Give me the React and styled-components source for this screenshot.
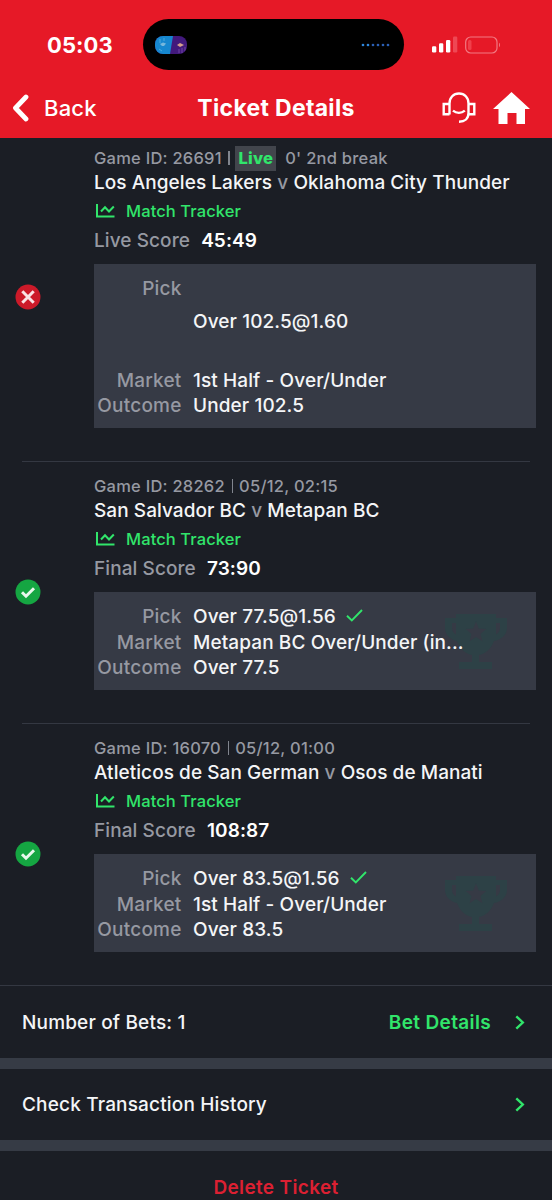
import React from "react";
import styled, { createGlobalStyle } from "styled-components";

const GlobalStyle = createGlobalStyle`
  * {
    box-sizing: border-box;
  }

  body {
    margin: 0;
    background: #1b1e25;
    font-family: Inter, "Liberation Sans", sans-serif;
    overflow: hidden;
  }
`;

const legs = [
  {
    id: "26691",
    live: true,
    time: "0' 2nd break",
    home: "Los Angeles Lakers",
    away: "Oklahoma City Thunder",
    scoreLabel: "Live Score",
    score: "45:49",
    won: false,
    pick: "Over 102.5@1.60",
    market: "1st Half - Over/Under",
    outcome: "Under 102.5",
  },
  {
    id: "28262",
    time: "05/12, 02:15",
    home: "San Salvador BC",
    away: "Metapan BC",
    scoreLabel: "Final Score",
    score: "73:90",
    won: true,
    pick: "Over 77.5@1.56",
    market: "Metapan BC Over/Under (in...",
    outcome: "Over 77.5",
  },
  {
    id: "16070",
    time: "05/12, 01:00",
    home: "Atleticos de San German",
    away: "Osos de Manati",
    scoreLabel: "Final Score",
    score: "108:87",
    won: true,
    pick: "Over 83.5@1.56",
    market: "1st Half - Over/Under",
    outcome: "Over 83.5",
  },
];

function IslandArt() {
  return (
    <svg width="32" height="18" viewBox="0 0 32 18">
      <defs>
        <clipPath id="pill">
          <rect width="32" height="18" rx="8" />
        </clipPath>
      </defs>
      <g clipPath="url(#pill)">
        <rect width="32" height="18" fill="#42197c" />
        <path d="M0 0h18l-3 18H0z" fill="#1687cf" />
        <path d="M5 3v4M9 2v3M4 13l3 2" stroke="#4ba9dc" strokeWidth="1" />
        <path d="M5 8l3-1.500 3 1-2 2.500H7z" fill="#76b7dc" />
        <path d="M22 9l3-2 4 2-4 2z" fill="#d5a08d" />
        <path d="M24 13v4M27 12v5M30 11v4" stroke="#7145a4" strokeWidth="1" />
      </g>
    </svg>
  );
}

function IslandDots() {
  return (
    <svg width="29" height="4" viewBox="0 0 29 4">
      {[0, 1, 2, 3, 4, 5].map((i) => (
        <circle key={i} cx={2 + i * 5} cy="2" r="1.35" fill={i < 2 ? "#2d86dc" : "#2b5fb4"} />
      ))}
    </svg>
  );
}

function Signal() {
  return (
    <svg width="26" height="17" viewBox="0 0 26 17">
      <rect x="0" y="10.300" width="4.300" height="6.200" rx="1.200" fill="#fff" />
      <rect x="7" y="7.300" width="4.300" height="9.200" rx="1.200" fill="#fff" />
      <rect x="14" y="4" width="4.300" height="12.500" rx="1.200" fill="#fff" />
      <rect x="21" y="0.500" width="4.300" height="16" rx="1.200" fill="#ee4854" />
    </svg>
  );
}

function Battery() {
  return (
    <svg width="36" height="18" viewBox="0 0 36 18" fill="none">
      <rect x="0.700" y="1" width="31.300" height="16" rx="5" stroke="#f27a83" strokeWidth="1.200" />
      <rect x="3" y="4" width="3.500" height="10" rx="1.500" fill="#f0404b" />
      <path d="M34 6.800c1.300.600 1.300 3.800 0 4.400z" fill="#f27a83" />
    </svg>
  );
}

function Headset() {
  return (
    <svg width="34" height="32" viewBox="0 0 34 32" fill="none" stroke="#fff" strokeWidth="2.400">
      <path d="M7.500 22.500V11.500C7.500 5.500 11.500 1.500 17 1.500s9.500 4 9.500 10V21c0 5.500-3.500 8.800-9.500 8.800" />
      <path d="M7.500 12H1.700v10.300h5.800M26.500 12h5.800v10.300h-5.800" />
      <path d="M11 18.700c3.300 2.900 8.500 2.900 11.800 0" />
    </svg>
  );
}

function Home() {
  return (
    <svg width="37" height="32" viewBox="0 0 37 32">
      <path d="M18.500 0L37 17h-5v15h-8.500V21h-9v11H5.500V17H0z" fill="#fff" />
    </svg>
  );
}

function TrackerIcon() {
  return (
    <svg width="19" height="14" viewBox="0 0 19 14" fill="none" stroke="#31e56b" strokeWidth="2">
      <path d="M1 0v12.500h17.500" />
      <path d="M5 7.500l4-4.300 4 4.300 4.800-5" />
    </svg>
  );
}

function StatusIcon({ won }) {
  return (
    <svg width="26" height="26" viewBox="0 0 26 26" fill="none">
      <circle cx="13" cy="13" r="12.500" fill={won ? "#15a642" : "#cc1a29"} />
      {won ? (
        <path d="M7 13.200l4 4L19 9.300" stroke="#e9f8ed" strokeWidth="3" />
      ) : (
        <path d="M7.300 7.300l11.400 11.400M18.700 7.300L7.300 18.700" stroke="#fae3e5" strokeWidth="3" />
      )}
    </svg>
  );
}

function Tick() {
  return (
    <svg width="17" height="13" viewBox="0 0 17 13" fill="none">
      <path d="M1 6.800l4.800 4.700L16 1" stroke="#31e56b" strokeWidth="1.900" />
    </svg>
  );
}

function Trophy() {
  return (
    <svg width="62" height="55" viewBox="0 0 62 55" fill="#2d4146">
      <path
        fillRule="evenodd"
        d="M11 0h40v4h11v10c0 7-6 12-13 13-3 8-9 13-15 14v7h13v7H14v-7h13v-7c-6-1-12-6-15-14C6 26 0 21 0 14V4h11zM7 9v5c0 3 1.500 5 4 6.500V9zm44 0v11.500c2.500-1.500 4-3.500 4-6.500V9zM31 7.500l-2.800 7.100-7.500.500 5.800 4.800-1.900 7.300 6.400-4.100 6.400 4.100-1.900-7.300 5.800-4.800-7.500-.500z"
      />
    </svg>
  );
}

function Chevron() {
  return (
    <svg width="10" height="15" viewBox="0 0 10 15" fill="none">
      <path d="M1.300 1.300l6.500 6.200-6.500 6.200" stroke="#31e56b" strokeWidth="2.400" />
    </svg>
  );
}

function Leg({ leg }) {
  return (
    <LegRow>
      <Status>
        <StatusIcon won={leg.won} />
      </Status>
      <Info>
        <Meta>
          Game ID: {leg.id} <Bar />
          {leg.live && <LiveTag>Live</LiveTag>}
          {leg.time}
        </Meta>
        <Teams>
          {leg.home} <span>v</span> {leg.away}
        </Teams>
        <Tracker>
          <TrackerIcon />
          Match Tracker
        </Tracker>
        <Score>
          {leg.scoreLabel} <b>{leg.score}</b>
        </Score>
        <PickBox>
          <PickRow $tall={!leg.won}>
            <Label>Pick</Label>
            <Value>
              {leg.pick}
              {leg.won && <Tick />}
            </Value>
          </PickRow>
          <PickRow>
            <Label>Market</Label>
            <Value>{leg.market}</Value>
          </PickRow>
          <PickRow>
            <Label>Outcome</Label>
            <Value>{leg.outcome}</Value>
          </PickRow>
          {leg.won && (
            <Watermark>
              <Trophy />
            </Watermark>
          )}
        </PickBox>
      </Info>
    </LegRow>
  );
}

export default function App() {
  return (
    <Screen>
      <GlobalStyle />
      <Header>
        <StatusBar>
          <Clock>05:03</Clock>
          <Island>
            <IslandArt />
            <IslandDots />
          </Island>
          <Indicators>
            <Signal />
            <Battery />
          </Indicators>
        </StatusBar>
        <NavBar>
          <Back>
            <svg width="18" height="28" viewBox="0 0 18 28" fill="none">
              <path
                d="M15 3L4.500 14 15 25"
                stroke="#fff"
                strokeWidth="4.800"
                strokeLinecap="round"
                strokeLinejoin="round"
              />
            </svg>
            Back
          </Back>
          <PageTitle>Ticket Details</PageTitle>
          <Actions>
            <Headset />
            <Home />
          </Actions>
        </NavBar>
      </Header>
      <Legs>
        {legs.map((leg) => (
          <Leg leg={leg} key={leg.id} />
        ))}
      </Legs>
      <FooterRow>
        <span>Number of Bets: 1</span>
        <Link>
          Bet Details
          <Chevron />
        </Link>
      </FooterRow>
      <FooterRow>
        <span>Check Transaction History</span>
        <Chevron />
      </FooterRow>
      <DeleteButton>Delete Ticket</DeleteButton>
    </Screen>
  );
}

const Screen = styled.div`
  width: 552px;
  height: 1200px;
  overflow: hidden;
  display: flex;
  flex-direction: column;
  background: #1b1e25;
  color: #f4f5f7;
`;

const Header = styled.header`
  flex: none;
  height: 138px;
  padding-top: 19px;
  background: #e61927;
  color: #fff;
  z-index: 1;
`;

const StatusBar = styled.div`
  display: grid;
  grid-template-columns: 143px 260.5px 1fr;
  align-items: center;
  height: 51px;
`;

const Clock = styled.span`
  padding-left: 47px;
  font-size: 22px;
  font-weight: 700;
  letter-spacing: 0.1px;
`;

const Island = styled.div`
  display: flex;
  align-items: center;
  justify-content: space-between;
  height: 51px;
  padding: 0 13.5px 0 12px;
  border-radius: 26px;
  background: #000;
`;

const Indicators = styled.div`
  display: flex;
  align-items: center;
  gap: 7px;
  padding-left: 28px;
`;

const NavBar = styled.div`
  display: grid;
  grid-template-columns: 1fr auto 1fr;
  align-items: center;
  height: 68px;
  padding: 7px 22px 0;
`;

const Back = styled.div`
  display: flex;
  align-items: center;
  gap: 15.5px;
  margin-left: -11.5px;
  font-size: 22px;
  font-weight: 500;
  letter-spacing: 0.2px;
`;

const PageTitle = styled.h1`
  margin: 0;
  font-size: 23px;
  font-weight: 700;
  letter-spacing: 0.3px;
`;

const Actions = styled.div`
  display: flex;
  align-items: center;
  justify-content: flex-end;
  gap: 17px;
`;

/* the list is scrolled a few pixels under the header */
const Legs = styled.main`
  flex: none;
  margin-top: -4px;
`;

const LegRow = styled.section`
  display: flex;
  margin: 0 22px;
  padding: 12px 0 33.5px;
  border-bottom: 1px solid #343842;

  &:last-child {
    margin: 0;
    padding-left: 22px;
    padding-right: 22px;
  }
`;

const Status = styled.div`
  display: flex;
  flex: none;
  align-items: center;
  width: 72px;
  margin: -14px 0 -33.5px;

  svg {
    margin-left: -7.5px;
  }
`;

const Info = styled.div`
  flex: 1;
  min-width: 0;
  margin-right: -5.5px;
`;

const Meta = styled.div`
  display: flex;
  align-items: center;
  height: 24px;
  color: #9699a2;
  font-size: 16.5px;
  font-weight: 500;
  letter-spacing: 0.24px;
  white-space: pre;
`;

const Bar = styled.i`
  width: 1.5px;
  height: 14px;
  margin: 0 6px 0 2px;
  background: #81858e;
`;

const LiveTag = styled.b`
  margin: 0 9px 0 -0.5px;
  padding: 0 3px;
  line-height: 25px;
  background: #42454c;
  color: #31e56b;
  font-weight: 800;
`;

const Teams = styled.div`
  height: 24px;
  line-height: 26px;
  font-size: 19px;
  font-weight: 500;
  letter-spacing: 0.06px;
  white-space: nowrap;

  span {
    color: #9699a2;
  }
`;

const Tracker = styled.div`
  display: flex;
  align-items: center;
  gap: 11px;
  height: 33px;
  padding-left: 2px;
  color: #31e56b;
  font-size: 16.5px;
  font-weight: 500;
  letter-spacing: 0.1px;
`;

const Score = styled.div`
  height: 37px;
  line-height: 27px;
  color: #9699a2;
  font-size: 19px;
  font-weight: 500;
  letter-spacing: 0.08px;

  b {
    margin-left: 6px;
    color: #fff;
    font-weight: 600;
  }
`;

const PickBox = styled.div`
  position: relative;
  padding: 12px 0 9px;
  background: #363a45;
`;

const PickRow = styled.div`
  display: flex;
  gap: 11.5px;
  height: ${({ $tall }) => ($tall ? "91.5px" : "25.5px")};
  align-items: ${({ $tall }) => ($tall ? "stretch" : "center")};
  font-size: 19px;
  font-weight: 500;
  line-height: 25.5px;
  letter-spacing: 0.1px;
  white-space: nowrap;
`;

const Label = styled.span`
  flex: none;
  width: 87.5px;
  color: #9699a2;
  letter-spacing: 0.2px;
  text-align: right;
`;

const Value = styled.span`
  display: flex;
  align-items: center;
  gap: 10px;
  z-index: 1;

  svg {
    margin-top: -3px;
  }
`;

const Watermark = styled.div`
  position: absolute;
  top: 22px;
  right: 29px;
  display: flex;
`;

const FooterRow = styled.div`
  display: flex;
  flex: none;
  align-items: center;
  justify-content: space-between;
  height: 82.5px;
  padding: 1px 27px 0 22px;
  border-bottom: 11px solid #363b45;
  font-size: 19px;
  font-weight: 500;
  letter-spacing: 0.17px;
`;

const Link = styled.span`
  display: flex;
  align-items: center;
  gap: 24px;
  color: #31e56b;
  font-weight: 600;
  letter-spacing: 0.35px;
`;

const DeleteButton = styled.button`
  flex: none;
  height: 72px;
  border: none;
  background: transparent;
  color: #dc2032;
  font-family: inherit;
  font-size: 19px;
  font-weight: 600;
  letter-spacing: 0.35px;
`;
